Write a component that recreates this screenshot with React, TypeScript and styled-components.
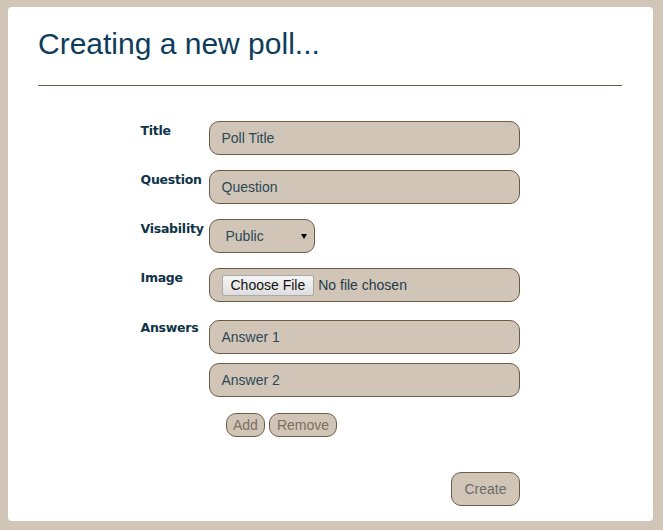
import React from "react";
import styled, { createGlobalStyle } from "styled-components";

const Global = createGlobalStyle`
  html, body {
    margin: 0;
    padding: 0;
    background: #d1c5b7;
  }
  body {
    font-family: "Liberation Sans", Arial, sans-serif;
  }
`;

const Page = styled.div`
  padding: 7px 10px 9px 8px;
  background: #d1c5b7;
`;

const Card = styled.div`
  background: #ffffff;
  border-radius: 4px;
  padding: 20px 31px 15px 30px;
`;

const Heading = styled.h1`
  margin: 0;
  font-family: "Liberation Sans", Arial, sans-serif;
  font-weight: normal;
  font-size: 30px;
  line-height: 34px;
  color: #0e3c5a;
`;

const Rule = styled.div`
  margin-top: 24px;
  height: 1px;
  background: #6e5b45;
`;

const Form = styled.form`
  width: 379px;
  margin: 35px auto 0;
  display: flex;
  flex-direction: column;
`;

const Row = styled.div<{ $gap?: number }>`
  display: flex;
  align-items: flex-start;
  margin-top: ${(p) => p.$gap ?? 0}px;
`;

const Label = styled.label<{ $offset?: number }>`
  width: 68px;
  flex: none;
  padding-top: ${(p) => p.$offset ?? 3}px;
  font-family: "DejaVu Sans", Verdana, sans-serif;
  font-weight: bold;
  font-size: 12.5px;
  letter-spacing: -0.25px;
  line-height: 14px;
  color: #0f3347;
`;

const Fields = styled.div`
  display: flex;
  flex-direction: column;
  gap: 9px;
  flex: 1;
`;

const Box = styled.div<{ $width?: number }>`
  box-sizing: border-box;
  width: ${(p) => (p.$width ? `${p.$width}px` : "311px")};
  height: 34px;
  display: flex;
  align-items: center;
  padding: 0 12px;
  background: #d1c5b7;
  border: 1px solid #6e5b45;
  border-radius: 10px;
  font-size: 14px;
  color: #2c4858;
`;

const SelectBox = styled(Box)`
  padding: 0 7px 0 16px;
  justify-content: space-between;
`;

const Arrow = styled.span`
  width: 0;
  height: 0;
  border-left: 3.5px solid transparent;
  border-right: 3.5px solid transparent;
  border-top: 5px solid #000;
  margin-top: 1px;
`;

const FileButton = styled.span`
  box-sizing: border-box;
  height: 21px;
  display: inline-flex;
  align-items: center;
  padding: 0 8px;
  margin-right: 4px;
  background: linear-gradient(#f6f6f6, #dedede);
  border: 1px solid #a9a9a9;
  border-radius: 2px;
  color: #111;
  font-size: 14px;
`;

const FileText = styled.span`
  color: #1f3b4b;
`;

const SmallButtons = styled.div`
  display: flex;
  gap: 4px;
  margin-top: 7px;
  padding-left: 17px;
`;

const Button = styled.button<{ $size?: "small" | "large" }>`
  box-sizing: border-box;
  height: ${(p) => (p.$size === "large" ? 34 : 24)}px;
  padding: 0 ${(p) => (p.$size === "large" ? 12 : 6.5)}px;
  background: #d1c5b7;
  border: 1px solid #6e5b45;
  border-radius: 10px;
  font-family: "Liberation Sans", Arial, sans-serif;
  font-size: 14px;
  color: ${(p) => (p.$size === "large" ? "#6b6b6b" : "#7b7062")};
  cursor: pointer;
`;

const Footer = styled.div`
  display: flex;
  justify-content: flex-end;
  margin-top: 35px;
`;

export default function App() {
  return (
    <>
      <Global />
      <Page>
        <Card>
          <Heading>Creating a new poll...</Heading>
          <Rule />
          <Form onSubmit={(e) => e.preventDefault()}>
            <Row>
              <Label>Title</Label>
              <Box>Poll Title</Box>
            </Row>
            <Row $gap={15}>
              <Label>Question</Label>
              <Box>Question</Box>
            </Row>
            <Row $gap={15}>
              <Label>Visability</Label>
              <SelectBox $width={106}>
                <span>Public</span>
                <Arrow />
              </SelectBox>
            </Row>
            <Row $gap={15}>
              <Label>Image</Label>
              <Box>
                <FileButton>Choose File</FileButton>
                <FileText>No file chosen</FileText>
              </Box>
            </Row>
            <Row $gap={18}>
              <Label $offset={1}>Answers</Label>
              <Fields>
                <Box>Answer 1</Box>
                <Box>Answer 2</Box>
                <SmallButtons>
                  <Button type="button">Add</Button>
                  <Button type="button">Remove</Button>
                </SmallButtons>
              </Fields>
            </Row>
            <Footer>
              <Button $size="large" type="submit">Create</Button>
            </Footer>
          </Form>
        </Card>
      </Page>
    </>
  );
}
